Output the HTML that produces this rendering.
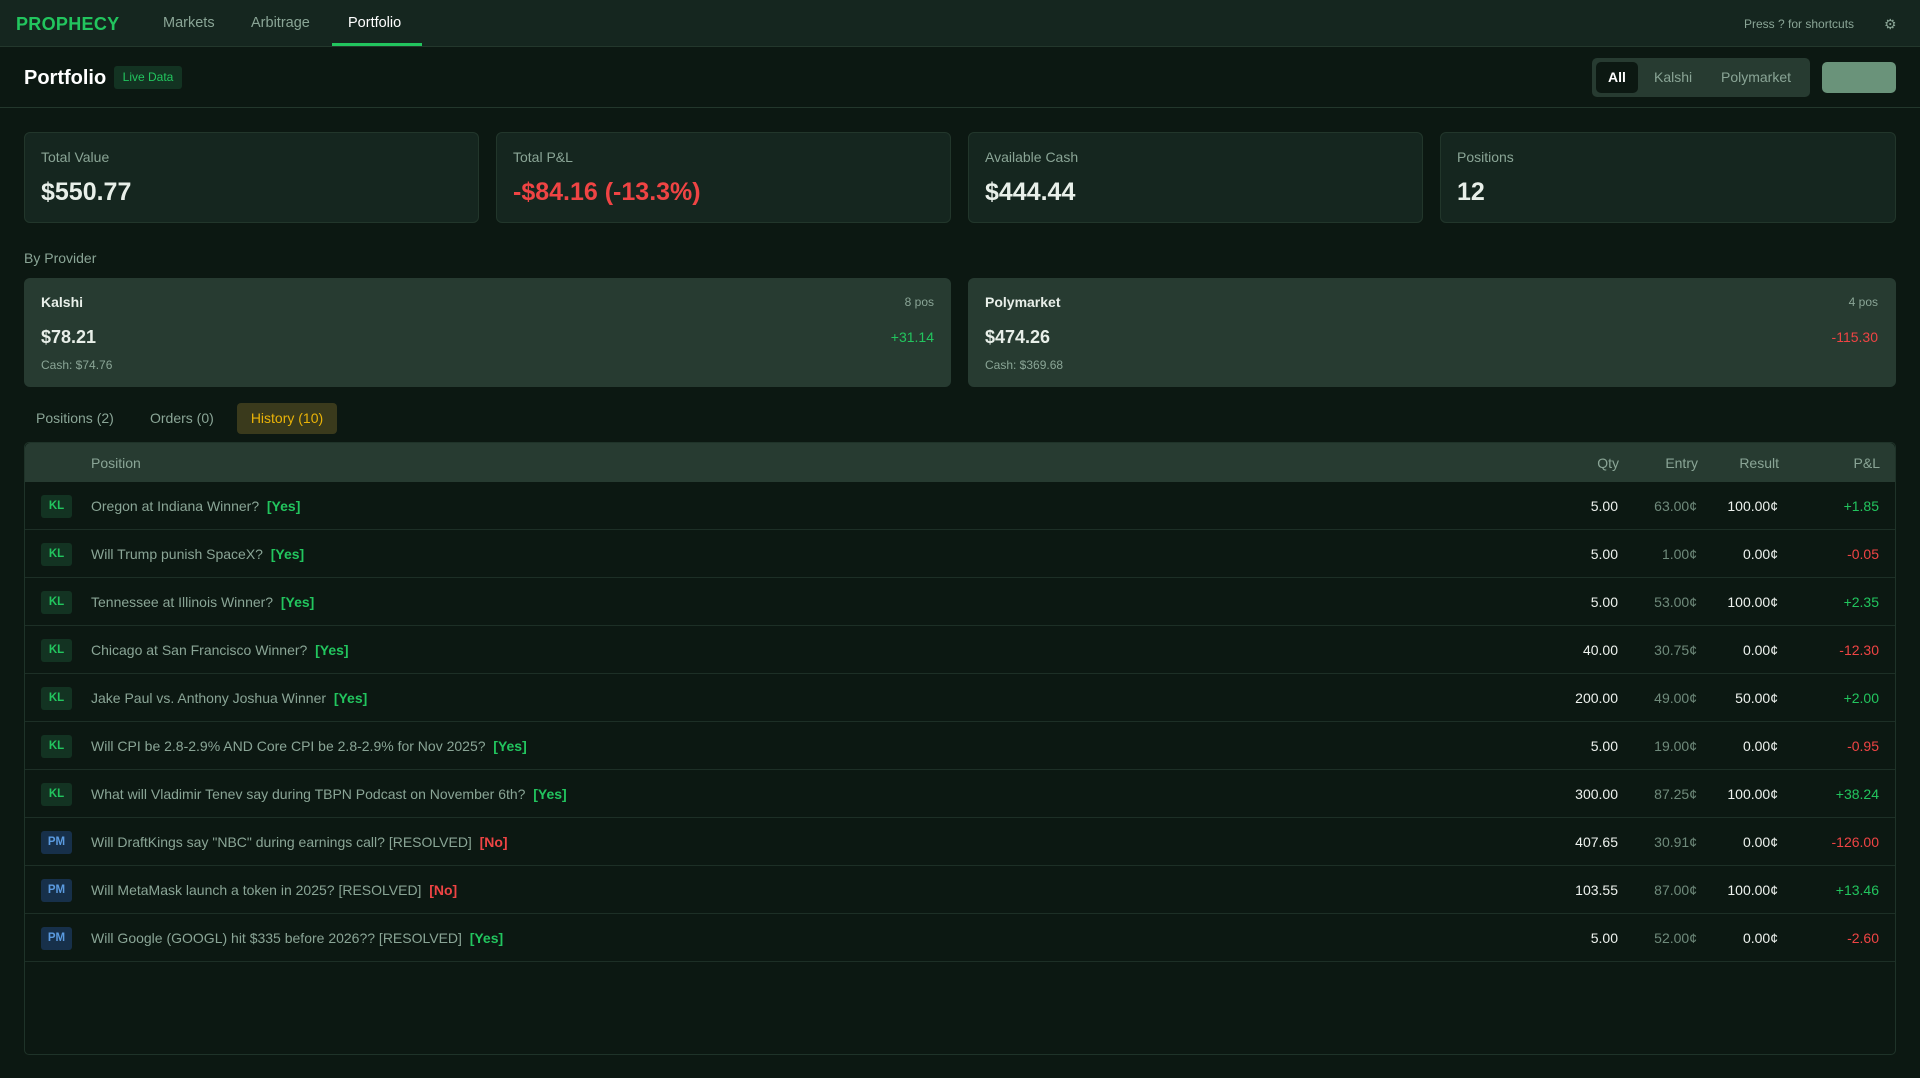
<!DOCTYPE html>
<html><head><meta charset="utf-8"><style>
*{box-sizing:border-box;margin:0;padding:0}
body{width:1920px;height:1078px;background:#0c1812;font-family:"Liberation Sans",sans-serif;color:#e8efe9;position:relative;overflow:hidden}
.abs{position:absolute}
.nav{left:0;top:0;width:1920px;height:47px;background:#15261f;border-bottom:1px solid #23372c}
.logo{left:16px;top:14px;font-size:18px;font-weight:bold;color:#22c55e;letter-spacing:.3px}
.nl{top:15px;font-size:14.5px;color:#8aa596}
.hdr{left:0;top:47px;width:1920px;height:61px;border-bottom:1px solid #23372c}
.card{background:#15261f;border:1px solid #22362b;border-radius:6px}
.lab{font-size:14px;color:#8aa596}
.val{font-size:25px;font-weight:bold}
.pc{background:#273b31;border-radius:6px}
.row{left:25px;width:1870px;height:48px;border-bottom:1px solid #1d2f26}
.row span{position:absolute;top:16px;font-size:14px}
.b{position:absolute;left:16px;top:13px;width:31px;height:23px;border-radius:3px;font-size:11.5px;font-weight:bold;text-align:center;line-height:23px}
.kl{background:#133322;color:#22c55e}
.pm{background:#17304a;color:#5b9be0}
.t{left:66px;color:#8aa596}
.g{color:#22c55e}.r{color:#ef4444}
.q{right:277px;text-align:right;color:#eef2ee}
.e{right:198px;text-align:right;color:#6f8a7b}
.res{right:117px;text-align:right;color:#eef2ee}
.p{right:16px;text-align:right}
</style></head><body>
<div class="abs nav"></div>
<div class="abs logo">PROPHECY</div>
<div class="abs nl" style="left:163px">Markets</div>
<div class="abs nl" style="left:251px">Arbitrage</div>
<div class="abs nl" style="left:348px;color:#fff">Portfolio</div>
<div class="abs" style="left:332px;top:43px;width:90px;height:3px;background:#22c55e"></div>
<div class="abs" style="left:1744px;top:17px;font-size:12px;color:#8aa596">Press ? for shortcuts</div>
<div class="abs" style="left:1884px;top:16px;font-size:14px;color:#8aa596">⚙</div>
<div class="abs hdr"></div>
<div class="abs" style="left:24px;top:67px;font-size:20px;font-weight:bold;color:#fff">Portfolio</div>
<div class="abs" style="left:114px;top:66px;width:68px;height:23px;background:#133322;border-radius:3px;color:#22c55e;font-size:12px;line-height:23px;text-align:center">Live Data</div>
<div class="abs" style="left:1592px;top:58px;width:218px;height:39px;background:#273b31;border-radius:5px"></div>
<div class="abs" style="left:1596px;top:62px;width:42px;height:31px;background:#0c1812;border-radius:5px;color:#fff;font-weight:bold;font-size:14px;line-height:31px;text-align:center">All</div>
<div class="abs" style="left:1654px;top:69px;font-size:14px;color:#8aa596">Kalshi</div>
<div class="abs" style="left:1721px;top:69px;font-size:14px;color:#8aa596">Polymarket</div>
<div class="abs" style="left:1822px;top:62px;width:74px;height:31px;background:#6a937a;border-radius:5px"></div>

<div class="abs card" style="left:24px;top:132px;width:455px;height:91px"></div>
<div class="abs card" style="left:496px;top:132px;width:455px;height:91px"></div>
<div class="abs card" style="left:968px;top:132px;width:455px;height:91px"></div>
<div class="abs card" style="left:1440px;top:132px;width:456px;height:91px"></div>
<div class="abs lab" style="left:41px;top:149px">Total Value</div>
<div class="abs val" style="left:41px;top:178px">$550.77</div>
<div class="abs lab" style="left:513px;top:149px">Total P&amp;L</div>
<div class="abs val r" style="left:513px;top:178px">-$84.16 (-13.3%)</div>
<div class="abs lab" style="left:985px;top:149px">Available Cash</div>
<div class="abs val" style="left:985px;top:178px">$444.44</div>
<div class="abs lab" style="left:1457px;top:149px">Positions</div>
<div class="abs val" style="left:1457px;top:178px">12</div>

<div class="abs lab" style="left:24px;top:250px">By Provider</div>
<div class="abs pc" style="left:24px;top:278px;width:927px;height:109px"></div>
<div class="abs pc" style="left:968px;top:278px;width:928px;height:109px"></div>
<div class="abs" style="left:41px;top:294px;font-size:14px;font-weight:bold">Kalshi</div>
<div class="abs" style="left:900px;top:295px;font-size:12px;color:#8aa596;width:34px;text-align:right">8 pos</div>
<div class="abs" style="left:41px;top:327px;font-size:18px;font-weight:bold">$78.21</div>
<div class="abs g" style="left:860px;top:329px;font-size:14px;width:74px;text-align:right">+31.14</div>
<div class="abs" style="left:41px;top:358px;font-size:12px;color:#8aa596">Cash: $74.76</div>
<div class="abs" style="left:985px;top:294px;font-size:14px;font-weight:bold">Polymarket</div>
<div class="abs" style="left:1844px;top:295px;font-size:12px;color:#8aa596;width:34px;text-align:right">4 pos</div>
<div class="abs" style="left:985px;top:327px;font-size:18px;font-weight:bold">$474.26</div>
<div class="abs r" style="left:1800px;top:329px;font-size:14px;width:78px;text-align:right">-115.30</div>
<div class="abs" style="left:985px;top:358px;font-size:12px;color:#8aa596">Cash: $369.68</div>

<div class="abs" style="left:36px;top:410px;font-size:14px;color:#8aa596">Positions (2)</div>
<div class="abs" style="left:150px;top:410px;font-size:14px;color:#8aa596">Orders (0)</div>
<div class="abs" style="left:237px;top:403px;width:100px;height:31px;background:#3a3a1c;border-radius:4px;color:#eab308;font-size:14px;line-height:31px;text-align:center">History (10)</div>

<div class="abs" style="left:24px;top:442px;width:1872px;height:613px;border:1px solid #1f3329;border-radius:5px"></div>
<div class="abs" style="left:25px;top:443px;width:1870px;height:39px;background:#273b31;border-radius:5px 5px 0 0"></div>
<div class="abs" style="left:91px;top:455px;font-size:14px;color:#8aa596">Position</div>
<div class="abs" style="right:301px;top:455px;font-size:14px;color:#8aa596">Qty</div>
<div class="abs" style="right:222px;top:455px;font-size:14px;color:#8aa596">Entry</div>
<div class="abs" style="right:141px;top:455px;font-size:14px;color:#8aa596">Result</div>
<div class="abs" style="right:40px;top:455px;font-size:14px;color:#8aa596">P&amp;L</div>

<div class="abs row" style="top:482px"><div class="b kl">KL</div><span class="t">Oregon at Indiana Winner? &nbsp;<b class="g">[Yes]</b></span><span class="q">5.00</span><span class="e">63.00¢</span><span class="res">100.00¢</span><span class="p g">+1.85</span></div>
<div class="abs row" style="top:530px"><div class="b kl">KL</div><span class="t">Will Trump punish SpaceX? &nbsp;<b class="g">[Yes]</b></span><span class="q">5.00</span><span class="e">1.00¢</span><span class="res">0.00¢</span><span class="p r">-0.05</span></div>
<div class="abs row" style="top:578px"><div class="b kl">KL</div><span class="t">Tennessee at Illinois Winner? &nbsp;<b class="g">[Yes]</b></span><span class="q">5.00</span><span class="e">53.00¢</span><span class="res">100.00¢</span><span class="p g">+2.35</span></div>
<div class="abs row" style="top:626px"><div class="b kl">KL</div><span class="t">Chicago at San Francisco Winner? &nbsp;<b class="g">[Yes]</b></span><span class="q">40.00</span><span class="e">30.75¢</span><span class="res">0.00¢</span><span class="p r">-12.30</span></div>
<div class="abs row" style="top:674px"><div class="b kl">KL</div><span class="t">Jake Paul vs. Anthony Joshua Winner &nbsp;<b class="g">[Yes]</b></span><span class="q">200.00</span><span class="e">49.00¢</span><span class="res">50.00¢</span><span class="p g">+2.00</span></div>
<div class="abs row" style="top:722px"><div class="b kl">KL</div><span class="t">Will CPI be 2.8-2.9% AND Core CPI be 2.8-2.9% for Nov 2025? &nbsp;<b class="g">[Yes]</b></span><span class="q">5.00</span><span class="e">19.00¢</span><span class="res">0.00¢</span><span class="p r">-0.95</span></div>
<div class="abs row" style="top:770px"><div class="b kl">KL</div><span class="t">What will Vladimir Tenev say during TBPN Podcast on November 6th? &nbsp;<b class="g">[Yes]</b></span><span class="q">300.00</span><span class="e">87.25¢</span><span class="res">100.00¢</span><span class="p g">+38.24</span></div>
<div class="abs row" style="top:818px"><div class="b pm">PM</div><span class="t">Will DraftKings say "NBC" during earnings call? [RESOLVED] &nbsp;<b class="r">[No]</b></span><span class="q">407.65</span><span class="e">30.91¢</span><span class="res">0.00¢</span><span class="p r">-126.00</span></div>
<div class="abs row" style="top:866px"><div class="b pm">PM</div><span class="t">Will MetaMask launch a token in 2025? [RESOLVED] &nbsp;<b class="r">[No]</b></span><span class="q">103.55</span><span class="e">87.00¢</span><span class="res">100.00¢</span><span class="p g">+13.46</span></div>
<div class="abs row" style="top:914px"><div class="b pm">PM</div><span class="t">Will Google (GOOGL) hit $335 before 2026?? [RESOLVED] &nbsp;<b class="g">[Yes]</b></span><span class="q">5.00</span><span class="e">52.00¢</span><span class="res">0.00¢</span><span class="p r">-2.60</span></div>
</body></html>
